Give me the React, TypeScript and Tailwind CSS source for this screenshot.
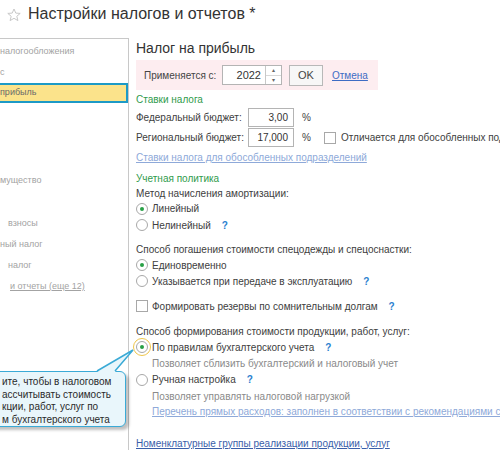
import React from "react";

const Radio = ({ checked = false, focus = false }: { checked?: boolean; focus?: boolean }) => (
	<span
		className={
			"relative shrink-0 w-[12px] h-[12px] rounded-full border border-[#a8a8a8] bg-white flex items-center justify-center " +
			(focus ? "outline outline-[#efc64a] outline-offset-[2px]" : "")
		}
	>
		{checked && <span className="w-[4px] h-[4px] rounded-full bg-[#28a046]" />}
	</span>
);

const Check = () => <span className="shrink-0 w-[12px] h-[12px] border border-[#a8a8a8] bg-white" />;

const Help = () => <span className="ml-[7px] text-[#2b7fcf] font-bold">?</span>;

const Row = ({ h, className = "", children }: { h: string; className?: string; children?: React.ReactNode }) => (
	<div className={"flex items-center whitespace-nowrap " + h + " " + className}>{children}</div>
);

const Field = ({ value, w }: { value: string; w: string }) => (
	<span className={"h-[19px] border border-[#b4b4b4] bg-white flex items-center justify-end pr-[5px] text-[#333] " + w}>
		{value}
	</span>
);

export default function App() {
	// левая панель: видимые обрывки пунктов
	const nav = ["мущество", "", "взносы", "ный налог", "налог"];

	return (
		<div className="relative w-[500px] h-[450px] overflow-hidden bg-white font-['Liberation_Sans',Arial,sans-serif] text-[10px] text-[#404040]">
			<div className="h-[38px] flex items-start pt-[4px] pl-[7px] gap-[7px]">
				<svg width="14" height="14" viewBox="0 0 14 14" className="mt-[4px]">
					<polygon
						points="7,1 8.8,5.1 13.2,5.4 9.8,8.3 10.9,12.6 7,10.3 3.1,12.6 4.2,8.3 0.8,5.4 5.2,5.1"
						fill="none"
						stroke="#c8c8c8"
						strokeWidth="1"
					/>
				</svg>
				<span className="text-[16px] leading-[20px] text-[#333]">Настройки налогов и отчетов *</span>
			</div>

			<div className="flex">
				<div className="w-[129px] h-[412px] shrink-0 border-t border-r border-[#c8c8c8] pt-[2px] text-[9px] text-[#a3a3a3]">
					<Row h="h-[21px]">налогообложения</Row>
					<Row h="h-[21px]">с</Row>
					<Row h="h-[20px]" className="-ml-[4px] border-2 border-[#1d9ac6] bg-[#fbe38b] pl-[2px] text-[#6a6a6a]">
						прибыль
					</Row>
					<div className="h-[67px]" />
					<Row h="h-[21px]">{nav[0]}</Row>
					<div className="h-[22px]" />
					<Row h="h-[21px]" className="pl-[8px]">{nav[2]}</Row>
					<Row h="h-[21px]">{nav[3]}</Row>
					<Row h="h-[21px]" className="pl-[8px]">{nav[4]}</Row>
					<Row h="h-[21px]" className="pl-[10px]">
						<span className="underline">и отчеты (еще 12)</span>
					</Row>
				</div>

				<div className="flex-1 pl-[7px] flex flex-col">
					<Row h="h-[18px]" className="mt-[1px] text-[14px] text-[#333]">Налог на прибыль</Row>
					<div className="mt-[3px] h-[30px] w-[242px] bg-[#fdedf0] flex items-center pl-[8px]">
						<span className="w-[78px] text-[#444] whitespace-nowrap">Применяется с:</span>
						<span className="h-[20px] w-[60px] border border-[#b4b4b4] bg-white flex">
							<span className="flex-1 flex items-center justify-end pr-[4px] text-[11px] text-[#333]">2022</span>
							<span className="w-[16px] border-l border-[#c8c8c8] flex flex-col">
								<span className="flex-1 flex items-center justify-center border-b border-[#d8d8d8] text-[6px] leading-none text-[#666]">
									▴
								</span>
								<span className="flex-1 flex items-center justify-center text-[6px] leading-none text-[#666]">▾</span>
							</span>
						</span>
						<span className="ml-[7px] h-[21px] w-[34px] border border-[#b8b8b8] bg-[#f7f7f7] flex items-center justify-center text-[11px] text-[#444]">
							OK
						</span>
						<span className="ml-[9px] underline text-[#3e6cc4]">Отмена</span>
					</div>

					<Row h="h-[17px]" className="mt-[1px] text-[#2f9b4c]">Ставки налога</Row>
					<Row h="h-[19px]">
						<span className="w-[112px]">Федеральный бюджет:</span>
						<Field value="3,00" w="w-[46px]" />
						<span className="ml-[8px]">%</span>
					</Row>
					<Row h="h-[19px]" className="mt-[1px]">
						<span className="w-[112px]">Региональный бюджет:</span>
						<Field value="17,000" w="w-[46px]" />
						<span className="ml-[8px]">%</span>
						<span className="ml-[13px] flex items-center gap-[5px]">
							<Check />
							Отличается для обособленных подразделений
						</span>
					</Row>
					<Row h="h-[18px]" className="mt-[1px]">
						<span className="underline text-[#8ea9d9]">Ставки налога для обособленных подразделений</span>
					</Row>

					<Row h="h-[16px]" className="mt-[4px] text-[#2f9b4c]">Учетная политика</Row>
					<Row h="h-[15px]">Метод начисления амортизации:</Row>
					<Row h="h-[15px]" className="gap-[4px]">
						<Radio checked />
						Линейный
					</Row>
					<Row h="h-[18px]" className="gap-[4px]">
						<Radio />
						Нелинейный
						<Help />
					</Row>

					<Row h="h-[16px]" className="mt-[7px]">Способ погашения стоимости спецодежды и спецоснастки:</Row>
					<Row h="h-[16px]" className="gap-[4px]">
						<Radio checked />
						Единовременно
					</Row>
					<Row h="h-[16px]" className="gap-[4px]">
						<Radio />
						Указывается при передаче в эксплуатацию
						<Help />
					</Row>

					<Row h="h-[16px]" className="mt-[9px] gap-[4px]">
						<Check />
						Формировать резервы по сомнительным долгам
						<Help />
					</Row>

					<Row h="h-[16px]" className="mt-[9px]">Способ формирования стоимости продукции, работ, услуг:</Row>
					<Row h="h-[16px]" className="gap-[4px]">
						<Radio checked focus />
						По правилам бухгалтерского учета
						<Help />
					</Row>
					<Row h="h-[16px]" className="pl-[16px] text-[#8a8a8a]">Позволяет сблизить бухгалтерский и налоговый учет</Row>
					<Row h="h-[17px]" className="gap-[4px]">
						<Radio />
						Ручная настройка
						<Help />
					</Row>
					<Row h="h-[16px]" className="pl-[16px] text-[#8a8a8a]">Позволяет управлять налоговой нагрузкой</Row>
					<Row h="h-[14px]" className="pl-[16px]">
						<span className="underline text-[#8ea9d9]">
							Перечень прямых расходов: заполнен в соответствии с рекомендациями специалистов
						</span>
					</Row>
					<Row h="h-[16px]" className="mt-[17px]">
						<span className="underline text-[#3a5ea9]">Номенклатурные группы реализации продукции, услуг</span>
					</Row>
				</div>
			</div>

			{/* подсказка */}
			<div className="absolute left-[-20px] top-[371px] w-[146px] h-[56px] rounded-[6px] border-[1.5px] border-[#3aaad6] bg-[#e9f6fb] shadow-[3px_3px_3px_rgba(0,0,0,0.25)] pl-[21px] pt-[4px] text-[10px] leading-[12.5px] text-[#2a2a2a] whitespace-nowrap">
				<div>ите, чтобы в налоговом</div>
				<div>ассчитывать стоимость</div>
				<div>кции, работ, услуг по</div>
				<div>м бухгалтерского учета</div>
			</div>
			<svg className="absolute left-[94px] top-[348px]" width="42" height="25" viewBox="0 0 42 25">
				<polygon points="3,24 21,24 39,2" fill="#e9f6fb" />
				<polyline points="3,23 39,2 21,23" fill="none" stroke="#3aaad6" strokeWidth="1.5" />
			</svg>
		</div>
	);
}
